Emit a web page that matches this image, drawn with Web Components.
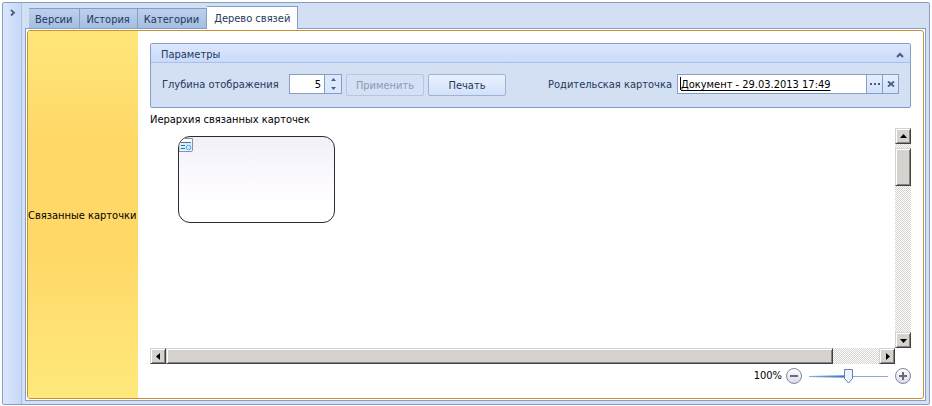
<!DOCTYPE html>
<html lang="ru">
<head>
<meta charset="utf-8">
<title>Дерево связей</title>
<style>
html{height:100%;background:#fff}
body{margin:0;padding:2px 2px 1px;min-height:100vh;box-sizing:border-box;display:flex;font:11px/14px "DejaVu Sans Condensed","DejaVu Sans",sans-serif;color:#1e395b}
</style>
</head>
<body>
<app-window>
  <tab-strip slot="tabs"></tab-strip>
  <side-caption slot="side">Связанные карточки</side-caption>
  <group-box caption="Параметры">
    <depth-field label="Глубина отображения" value="5"></depth-field>
    <push-button disabled>Применить</push-button>
    <push-button>Печать</push-button>
    <link-field label="Родительская карточка" value="Документ - 29.03.2013 17:49"></link-field>
  </group-box>
  <card-canvas caption="Иерархия связанных карточек"></card-canvas>
  <zoom-bar></zoom-bar>
</app-window>
<script>
function define(name, html){
  customElements.define(name, class extends HTMLElement{
    constructor(){
      super();
      this.attachShadow({mode:'open'});
    }
    connectedCallback(){
      const t=document.createElement('template');
      t.innerHTML='<style>*{box-sizing:border-box}button,input{font:inherit;color:inherit;margin:0;border-radius:0}button{padding:0}svg{display:block}</style>'+(typeof html==='function'?html(this):html);
      this.shadowRoot.replaceChildren(t.content.cloneNode(true));
    }
  });
}

define('app-window',`<style>
:host{flex:1;display:flex;box-sizing:border-box;border:1px solid #859ec6;border-radius:2px;background:#d3dff3;min-width:0}
.rail{width:19px;border:0;border-right:1px solid #a9c1e6;background:linear-gradient(90deg,#dbe7fd,#c6d8f7);display:flex;justify-content:center;padding:6px 0 0 2px}
.main{flex:1;min-width:0;display:flex;flex-direction:column;padding:3px 3px 3px}
.frame{flex:1;display:flex;border:1px solid #859ec6;background:#fff;padding:1px}
.gold{flex:1;display:flex;border:1px solid #c8902f;border-radius:3px;overflow:hidden;min-width:0}
.body{flex:1;min-width:0;display:flex;flex-direction:column;padding:12px 12px 14px}
</style>
<button class="rail" aria-label="Развернуть панель"><svg width="7" height="8" viewBox="0 0 7 8"><path d="M1 1l3 2.7L1 6.5" fill="none" stroke="#4d5b82" stroke-width="1.8"/></svg></button>
<div class="main"><slot name="tabs"></slot><div class="frame"><div class="gold"><slot name="side"></slot><div class="body"><slot></slot></div></div></div></div>`);

define('tab-strip',`<style>
:host{display:flex;align-items:flex-end;padding-left:4px;position:relative;z-index:1}
button{height:20px;border:1px solid #859ec6;border-left-width:0;border-bottom:0;background:linear-gradient(#bdd1ee,#a5bde0);padding:2px 7px 0 6px;white-space:nowrap}
button:first-child{border-left-width:1px;padding:2px 7px 0 6px}
button[aria-selected=true]{height:23px;margin-bottom:-1px;padding:1px 7px 0;background:#fff}
</style>
<button role="tab">Версии</button><button role="tab">История</button><button role="tab">Категории</button><button role="tab" aria-selected="true">Дерево связей</button>`);

define('side-caption',`<style>
:host{box-sizing:border-box;width:110px;padding-top:2px;display:flex;align-items:center;white-space:nowrap;color:#000;background:linear-gradient(#ffe67a,#ffd867 30%,#ffd867 60%,#ffe97b)}
</style><slot></slot>`);

define('group-box',h=>`<style>
:host{display:block;border:1px solid #859ec6;border-radius:2px;background:#d3dff3}
header{height:19px;display:flex;align-items:center;justify-content:space-between;padding:3px 4px 0 10px;background:linear-gradient(#dce7fd,#c9dafa);border-bottom:1px solid #a9c1e6}
header button{border:0;background:none;width:12px;height:12px;display:grid;place-items:center}
.row{display:flex;gap:4px;padding:11px 11px 11px;align-items:flex-start}
</style>
<header><span>${h.getAttribute('caption')}</span><button aria-label="Свернуть"><svg width="8" height="6" viewBox="0 0 8 6"><path d="M1 5l3-3 3 3" fill="none" stroke="#4d5b82" stroke-width="2"/></svg></button></header>
<div class="row"><slot></slot></div>`);

define('depth-field',h=>`<style>
:host{display:flex;align-items:center;white-space:nowrap}
label{width:127px;padding-top:2px}
.box{width:53px;height:20px;border:1px solid #859ec6;background:#fff;display:flex}
input{flex:1;min-width:0;border:0;background:none;text-align:right;padding:2px 3px 0 0;color:#000;outline:0}
.spin{width:17px;border-left:1px solid #859ec6;display:grid;grid-template-rows:1fr 1fr}
.spin button{border:0;background:#dce8fc;display:grid;place-items:center}
</style>
<label for="d">${h.getAttribute('label')}</label>
<div class="box"><input id="d" value="${h.getAttribute('value')}"><div class="spin">
<button aria-label="Больше"><svg width="5" height="3"><path d="M0 3L2.5 0 5 3z" fill="#4d5b82"/></svg></button>
<button aria-label="Меньше"><svg width="5" height="3"><path d="M0 0L2.5 3 5 0z" fill="#4d5b82"/></svg></button></div></div>`);

define('push-button',h=>`<style>
:host{display:block}
button{width:78px;height:22px;padding-top:1px;border:1px solid #a0b2d3;border-radius:2px;background:linear-gradient(#e9f1ff,#d2e1fa);display:block}
button:disabled{color:#8d9bb0;border-color:#b5c6e2;background:#d3e0f6}
</style><button ${h.hasAttribute('disabled')?'disabled':''}><slot></slot></button>`);

define('link-field',h=>`<style>
:host{display:flex;align-items:center;gap:5px;margin-left:auto;white-space:nowrap}
label{padding-top:2px}
.box{width:222px;height:20px;border:1px solid #859ec6;background:#fff;display:flex}
input{flex:1;min-width:0;border:0;padding:2px 3px 0;color:#000;text-decoration:underline;text-underline-offset:2px;outline:0;background:linear-gradient(#000,#000) 2px 2px/1px 13px no-repeat}
button{width:16px;border:0;border-left:1px solid #859ec6;background:linear-gradient(#e4eeff,#d2e1fa);display:grid;place-items:center}
</style>
<label for="p">${h.getAttribute('label')}</label>
<div class="box"><input id="p" value="${h.getAttribute('value')}">
<button aria-label="Выбрать"><svg width="10" height="2"><path d="M0 0h2v2H0zM4 0h2v2H4zM8 0h2v2H8z" fill="#4d5b82"/></svg></button>
<button aria-label="Очистить"><svg width="8" height="6" viewBox="0 0 8 6"><path d="M1 .5l6 5M7 .5l-6 5" stroke="#4d5b82" stroke-width="1.8"/></svg></button></div>`);

define('scroll-bar',h=>{
  const v=h.getAttribute('dir')==='v';
  const tri=v?['M4 9h7L7.500 5z','M4 6h7L7.500 10z']:['M9 4v7L5 7.500z','M6 4v7L10 7.500z'];
  const svg=d=>`<svg width="13" height="13" viewBox="1 1 13 13"><path d="${d}" fill="#000"/></svg>`;
  return `<style>
:host{display:flex;flex-direction:${v?'column':'row'};background:repeating-conic-gradient(#d6d3ce 0 25%,#fff 0 50%) 0 0/2px 2px}
button,.thumb{background:#d6d3ce;border:1px solid;border-color:#d6d3ce #424142 #424142 #d6d3ce;box-shadow:inset 1px 1px #fff,inset -1px -1px #848284}
button{width:16px;height:16px;display:grid;place-items:center;flex:none}
.track{flex:1;display:flex;flex-direction:${v?'column':'row'}}
.thumb{flex:0 0 ${h.getAttribute('size')};${v?'margin-top:4px':''}}
</style><button aria-label="Назад">${svg(tri[0])}</button><div class="track"><div class="thumb"></div></div><button aria-label="Вперёд">${svg(tri[1])}</button>`;
});

define('card-canvas',h=>`<style>
:host{flex:1;display:flex;flex-direction:column;color:#000}
.cap{padding:5px 0 1px}
.grid{flex:1;display:grid;grid-template:1fr 16px/1fr 16px}
.view{position:relative;min-height:100px}
.node{position:absolute;left:28px;top:8px;width:157px;height:87px;border:1px solid #2c2c30;border-radius:12px;background:linear-gradient(#f0f0f8,#fdfbff 55%,#fff);overflow:hidden}
</style>
<div class="cap">${h.getAttribute('caption')}</div>
<div class="grid"><div class="view"><div class="node"><svg width="15" height="16" viewBox="0 0 15 16"><path d="M0 1.500h13.500V13q0 1.500-1.500 1.500H0z" fill="#fff" stroke="#8192ad"/><path d="M1 6h12v7.500H1z" fill="#d3f1fc"/><path d="M1 5.500h11" stroke="#59708c"/><path d="M2 8.500h4M2 11.500h4" stroke="#466a90"/><circle cx="9.500" cy="10.500" r="2.300" fill="#c5e9ff" stroke="#5aa5f2"/></svg></div></div>
<scroll-bar dir="v" size="38px"></scroll-bar><scroll-bar dir="h" size="93.5%"></scroll-bar></div>`);

define('zoom-bar',`<style>
:host{display:flex;align-items:center;justify-content:flex-end;color:#000;padding-top:4px}
label{margin-right:4px}
button{border:0;background:none;width:16px;height:16px}
input{appearance:none;width:79px;height:16px;margin:0 7px;background:linear-gradient(90deg,#8fa9d6,#3b70b7 50%,#8fa9d6 52%) 0 8px/100% 1px no-repeat,linear-gradient(90deg,#fff,#6e9edb 50%,transparent 50%) 0 7px/100% 3px no-repeat}
input::-webkit-slider-thumb{appearance:none;width:9px;height:15px;background:url("data:image/svg+xml,%3Csvg xmlns='http://www.w3.org/2000/svg' width='9' height='15'%3E%3Cpath d='M.5 .5h8v9l-4 4.500-4-4.500z' fill='%23eef3fc' stroke='%236380b5'/%3E%3C/svg%3E") no-repeat}
</style>
<label for="z">100%</label>
<button aria-label="Уменьшить"><svg width="16" height="16"><defs><linearGradient id="g" x2="0" y2="1"><stop stop-color="#fff"/><stop offset="1" stop-color="#d5daea"/></linearGradient></defs><circle cx="8" cy="8" r="7.500" fill="url(#g)" stroke="#8187a0"/><path d="M4 7h8v2H4z" fill="#6b6b78"/></svg></button>
<input id="z" type="range" min="0" max="200" value="100">
<button aria-label="Увеличить"><svg width="16" height="16"><circle cx="8" cy="8" r="7.500" fill="url(#g)" stroke="#8187a0"/><path d="M4 7h3V4h2v3h3v2H9v3H7V9H4z" fill="#6b6b78"/></svg></button>`);
</script>
</body>
</html>
